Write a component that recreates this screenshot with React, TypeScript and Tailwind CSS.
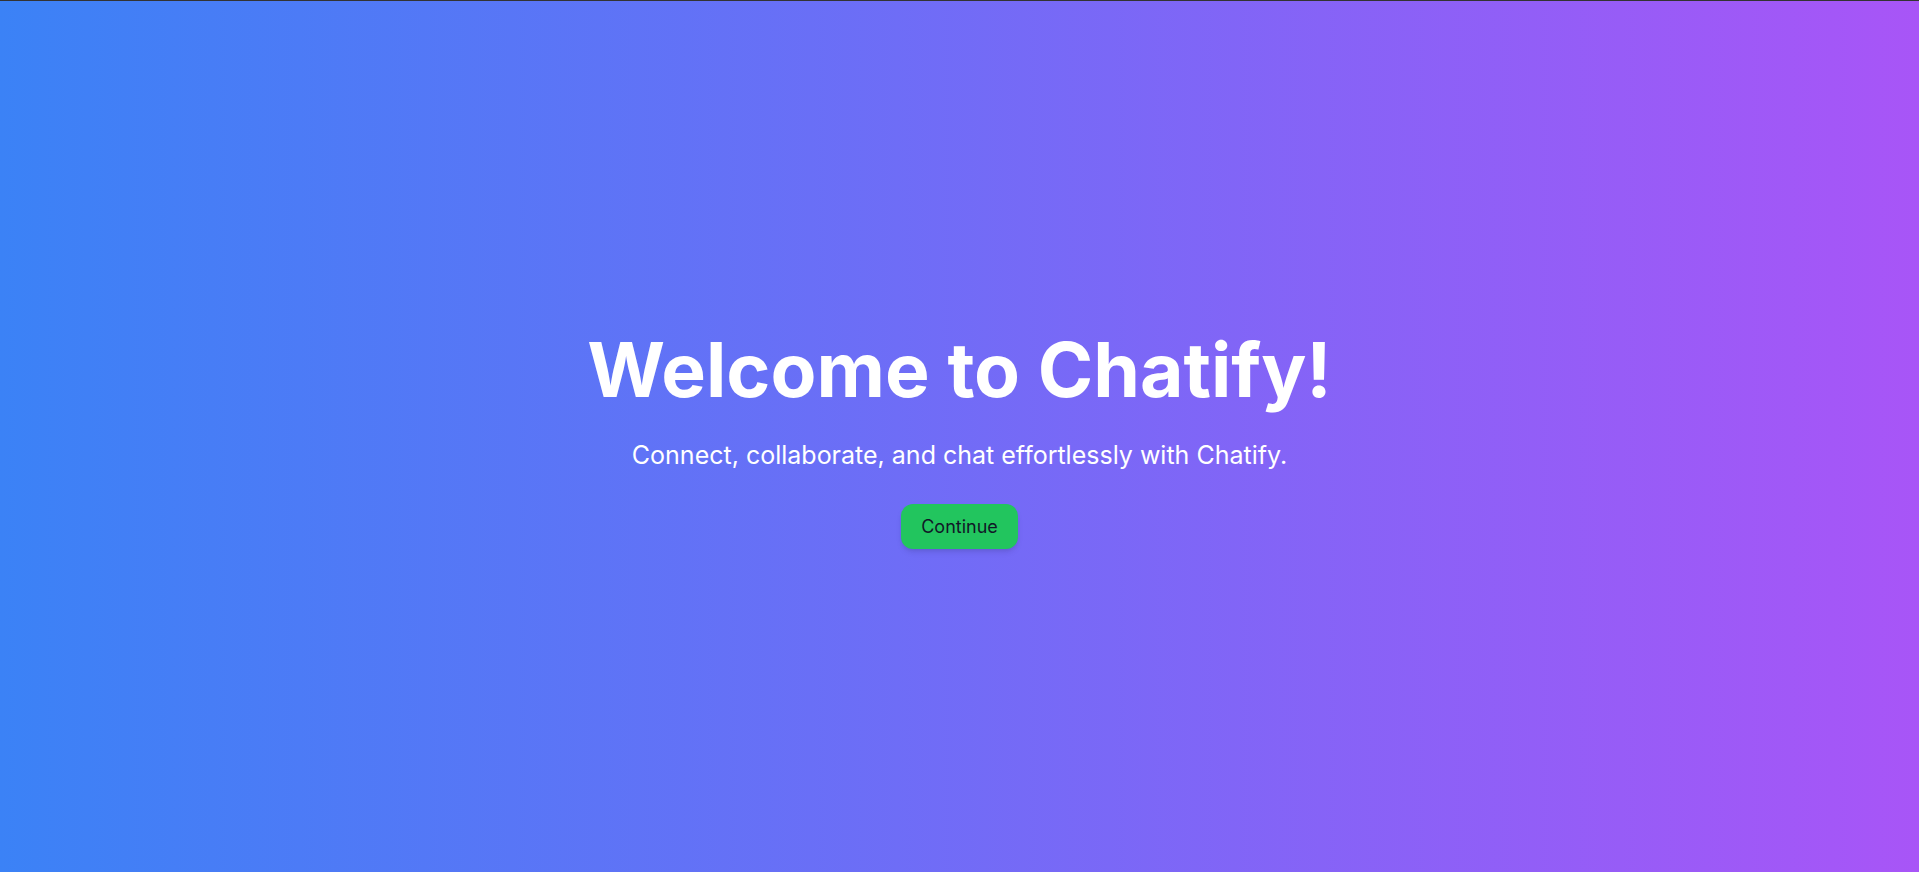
export default function App() {
  return (
    <div
      className="h-screen w-full border-t border-[#333333] pt-2 bg-[linear-gradient(to_right,#3b82f6,#a855f7)] flex flex-col items-center justify-center text-white"
      style={{ fontFamily: "Inter, 'Noto Sans', sans-serif" }}
    >
      <h1 className="text-[75px] leading-none font-bold mb-8">Welcome to Chatify!</h1>
      <p className="text-[25px] leading-[33px] mb-8">Connect, collaborate, and chat effortlessly with Chatify.</p>
      <button className="bg-[#22c55e] text-[#111827] text-lg leading-7 px-5 py-2 h-[45px] rounded-xl shadow-md">Continue</button>
    </div>
  );
}
